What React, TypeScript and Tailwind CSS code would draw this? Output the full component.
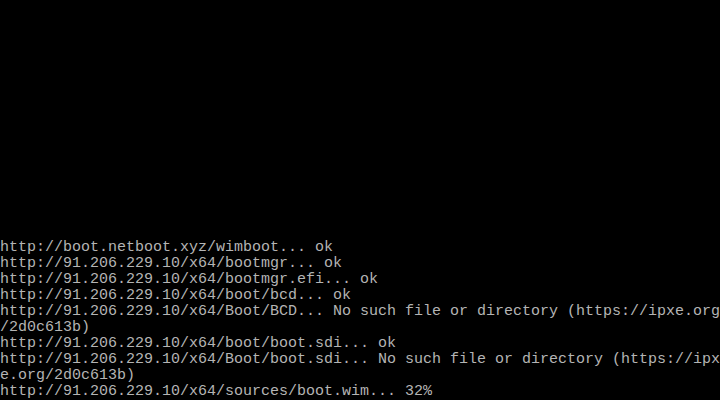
export default function App() {
  const lines = [
    "http://boot.netboot.xyz/wimboot... ok",
    "http://91.206.229.10/x64/bootmgr... ok",
    "http://91.206.229.10/x64/bootmgr.efi... ok",
    "http://91.206.229.10/x64/boot/bcd... ok",
    "http://91.206.229.10/x64/Boot/BCD... No such file or directory (https://ipxe.org",
    "/2d0c613b)",
    "http://91.206.229.10/x64/boot/boot.sdi... ok",
    "http://91.206.229.10/x64/Boot/boot.sdi... No such file or directory (https://ipx",
    "e.org/2d0c613b)",
    "http://91.206.229.10/x64/sources/boot.wim... 32%",
  ];
  return (
    <div className="w-[720px] h-[400px] bg-black flex flex-col justify-end overflow-hidden text-[#b4b4b4] text-[15px] leading-[16px] font-['Liberation_Mono',monospace]">
      {lines.map((l, i) => (
        <div key={i} className="h-4 whitespace-pre">
          {l}
        </div>
      ))}
    </div>
  );
}
